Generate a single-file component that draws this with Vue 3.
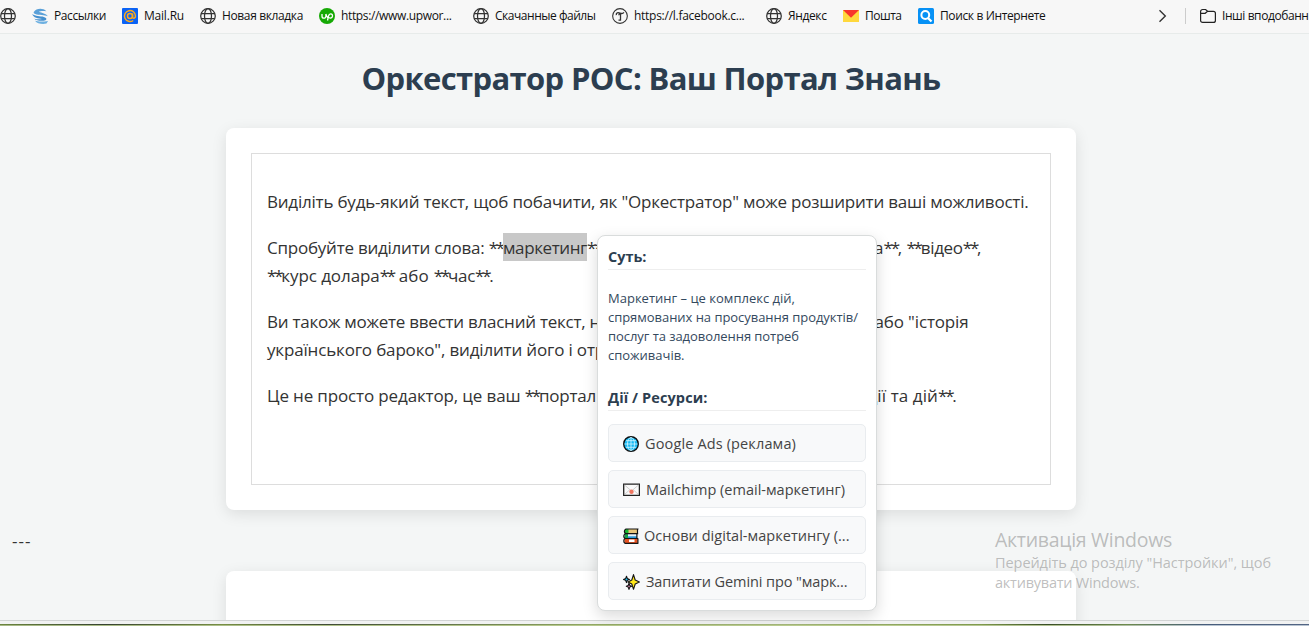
<script setup>
const bookmarks = [
  { icon: 'globe', label: '', text: 0, pitch: 32 },
  { icon: 'stream', label: 'Рассылки', text: 52, pitch: 90 },
  { icon: 'mail', label: 'Mail.Ru', text: 40, pitch: 78 },
  { icon: 'globe', label: 'Новая вкладка', text: 81, pitch: 119 },
  { icon: 'up', label: 'https://www.upwor...', text: 110.5, pitch: 154 },
  { icon: 'globe', label: 'Скачанные файлы', text: 100.5, pitch: 139 },
  { icon: 'tee', label: 'https://l.facebook.c...', text: 110.5, pitch: 154 },
  { icon: 'globe', label: 'Яндекс', text: 38.5, pitch: 77 },
  { icon: 'post', label: 'Пошта', text: 36.5, pitch: 75 },
  { icon: 'search', label: 'Поиск в Интернете', text: 105.5, pitch: 140 },
]

const stars = { t: '**', w: 14.3 }

const paragraphs = [
  [[{ t: 'Виділіть будь-який текст, щоб побачити, як "Оркестратор" може розширити ваші можливості.', w: 761.5 }]],
  [
    [
      { t: 'Спробуйте виділити слова: ', w: 221.7 },
      stars,
      { t: 'маркетинг', w: 84, selected: true },
      stars,
      { gap: 272.7 },
      { t: 'а', w: 9.5 },
      stars,
      { t: ', ', w: 8.7 },
      stars,
      { t: 'відео', w: 42 },
      stars,
      { t: ',', w: 4 },
    ],
    [
      stars,
      { t: 'курс долара', w: 98.4 },
      stars,
      { t: ' або ', w: 39.7 },
      stars,
      { t: 'час', w: 27 },
      stars,
      { t: '.', w: 4 },
    ],
  ],
  [
    [{ t: 'Ви також можете ввести власний текст, н', w: 333 }, { gap: 274.5 }, { t: 'або "історія', w: 94 }],
    [{ t: 'українського бароко", виділити його і отр', w: 338 }],
  ],
  [
    [
      { t: 'Це не просто редактор, це ваш ', w: 257.700 },
      stars,
      { t: 'портал', w: 57 },
      { gap: 271.5 },
      { t: 'дії та дій', w: 70.5 },
      stars,
      { t: '.', w: 4 },
    ],
  ],
]

const summary = [
  { t: 'Маркетинг – це комплекс дій,', w: 187 },
  { t: 'спрямованих на просування продуктів/', w: 250 },
  { t: 'послуг та задоволення потреб', w: 191 },
  { t: 'споживачів.', w: 76.5 },
]

const actions = [
  { icon: 'web', t: 'Google Ads (реклама)', w: 151, gap: 6 },
  { icon: 'letter', t: 'Mailchimp (email-маркетинг)', w: 199, gap: 6 },
  { icon: 'books', t: 'Основи digital-маркетингу (...', w: 205.5, gap: 5 },
  { icon: 'sparkles', t: 'Запитати Gemini про "марк...', w: 201.5, gap: 6 },
]

// Spreads the letters of a label so that it fills the given width.
const vFit = {
  mounted(el, { value }) {
    if (!value) return
    const natural = el.getBoundingClientRect().width
    el.style.letterSpacing = `${(value - natural) / el.textContent.length}px`
  },
}
</script>

<template>
  <div class="screen">
    <nav class="bar">
      <div v-for="(b, i) in bookmarks" :key="i" class="bookmark" :style="{ width: b.pitch + 'px' }">
        <svg class="ico" viewBox="0 0 16 16" fill="none">
          <g v-if="b.icon === 'globe'" stroke="#333" stroke-width="1.25">
            <circle cx="8" cy="8" r="7.3" />
            <ellipse cx="8" cy="8" rx="3.5" ry="7.3" />
            <path d="M1.2 5.5h13.6M1.2 10.5h13.6" />
          </g>
          <g v-else-if="b.icon === 'stream'">
            <path d="M2 3.8C4 .2 11 -.4 14.300 3.200c-3-.5-6-.3-7.500.5C10 5 14 5.300 15.800 8.300c-3-1.500-9-.8-12.500-2.200C1.700 5.300 1.300 4.600 2 3.800Z" fill="#5aa0d8" />
            <path d="M.2 6c3 2.500 8 1.900 11.700 2.900 2.700.7 3.200 2.400 1.600 3.400C10 13.500 4 12.700 2.300 10.700c3 .8 6 .7 7.700.2C6.500 10.300 1.200 10 .2 6Z" fill="#4590cf" />
            <path d="M3 12.700c3 1 7.500 1.100 13 .3l-1.500 2.600c-4 .9-9.500.2-11.500-2.900Z" fill="#6db0e1" />
          </g>
          <g v-else-if="b.icon === 'mail'">
            <rect width="16" height="16" rx="1" fill="#0a62f5" />
            <circle cx="8" cy="8" r="2.500" stroke="#ffaa1a" stroke-width="1.500" />
            <path d="M10.500 5.500v3.300c0 2.300 3 1.900 3-.8a5.500 5.500 0 1 0-2.300 4.500" stroke="#ffaa1a" stroke-width="1.500" />
          </g>
          <g v-else-if="b.icon === 'up'">
            <circle cx="8" cy="8" r="8" fill="#16a905" />
            <path d="M3 6v2.200c0 2.600 3.900 2.600 3.900 0V6M6.900 6c.4 2 1.200 3 2 3.900M8.500 12.500l1-4.500c.8-3.200 4.300-2.600 4 .1-.3 2.300-3 2.500-4.300.8" stroke="#fff" stroke-width="1.300" />
          </g>
          <g v-else-if="b.icon === 'tee'" stroke="#333">
            <circle cx="8" cy="8" r="7.350" stroke-width="1.100" />
            <path d="M4.300 7.200C3.900 4.600 6 4.300 8 5.100c1.800.7 3 .6 3.900-.8M8.500 5.300v6.900M6.800 7.300c0-1 .6-1.700 1.700-1.900M6.500 12.100h2.600" stroke-width="1.300" />
          </g>
          <g v-else-if="b.icon === 'post'">
            <path d="M0 2h16v12H0Z" fill="#ffd83d" />
            <path d="M0 2h16L8 9.700Z" fill="#f8352c" />
          </g>
          <g v-else>
            <rect width="16" height="16" rx="1.500" fill="#0791f5" />
            <circle cx="7.300" cy="7" r="3.900" stroke="#fff" stroke-width="2" />
            <path d="m10 10 3.500 3.500" stroke="#fff" stroke-width="2.300" />
          </g>
        </svg>
        <span v-if="b.label" v-fit="b.text">{{ b.label }}</span>
      </div>
      <div class="bar-end">
        <svg class="chevron" viewBox="0 0 9 14"><path d="m1.500 1.300 5.800 5.700-5.800 5.700" fill="none" stroke="#333" stroke-width="1.400" /></svg>
        <i class="divider"></i>
        <svg class="ico folder" viewBox="0 0 16 16" fill="none" stroke="#222" stroke-width="1.200">
          <path d="M.6 3.500A2 2 0 0 1 2.600 1.500h3l2 1.800h5.800a2 2 0 0 1 2 2v7.100a2 2 0 0 1-2 2H2.600a2 2 0 0 1-2-2ZM.6 5.300h4.600L7.600 3.300" />
        </svg>
        <span v-fit="86.500">Інші вподобанн</span>
      </div>
    </nav>

    <main class="page">
      <h1><span v-fit="579">Оркестратор РОС: Ваш Портал Знань</span></h1>
      <section class="card">
        <div class="editor">
          <p v-for="(lines, i) in paragraphs" :key="i">
            <span v-for="(line, j) in lines" :key="j" class="line">
              <template v-for="(s, k) in line" :key="k">
                <i v-if="s.gap" :style="{ width: s.gap + 'px' }"></i>
                <span v-else v-fit="s.w" :class="{ selected: s.selected }">{{ s.t }}</span>
              </template>
            </span>
          </p>
        </div>
      </section>
      <div class="rule-text"><span v-fit="19.5">---</span></div>
      <section class="card next"></section>
    </main>

    <footer class="edge"></footer>

    <aside class="popup">
      <h2><span v-fit="38.500">Суть:</span></h2>
      <div class="summary">
        <div v-for="s in summary" :key="s.t"><span v-fit="s.w">{{ s.t }}</span></div>
      </div>
      <h2><span v-fit="99.500">Дії / Ресурси:</span></h2>
      <div class="actions">
        <button v-for="a in actions" :key="a.t" :style="{ gap: a.gap + 'px' }">
          <svg v-if="a.icon === 'web'" width="16" height="16" viewBox="0 0 16 16" fill="none">
            <circle cx="8" cy="8" r="7.300" fill="#18b9f2" stroke="#111" stroke-width="1.400" />
            <path d="M8 1.500v13M1.500 8h13M3 4.700h10M3 11.300h10" stroke="#d6f6ff" stroke-width=".8" />
            <ellipse cx="8" cy="8" rx="3.500" ry="6.500" stroke="#d6f6ff" stroke-width=".8" />
          </svg>
          <svg v-else-if="a.icon === 'letter'" width="17" height="16" viewBox="0 0 17 16" fill="none">
            <path d="M.7 2.200h15.700v11.200H.7Z" fill="#fafafa" stroke="#222" stroke-width="1.300" />
            <path d="m1.500 3 7 6 7-6M1.500 12.500l5-4.500M15.500 12.500l-5-4.500" stroke="#bbb" stroke-width=".7" />
            <circle cx="8.500" cy="9.800" r="2.200" fill="#ef7660" />
          </svg>
          <svg v-else-if="a.icon === 'books'" width="16" height="16" viewBox="0 0 16 16" fill="none">
            <path d="M2 1h12.500v4.500H2Z" fill="#e9c67b" />
            <path d="M2 1h3.500v4.500H2Z" fill="#19b832" />
            <path d="M1.500 5.500h12.500v5H1.500Z" fill="#e9f3fa" />
            <path d="M1.500 5.500H5v5H1.500Z" fill="#16a24b" />
            <path d="M5 8.300h9v1.800H5Z" fill="#2995d6" />
            <path d="M1.500 11h13.200v4H1.500Z" fill="#e75221" />
            <path d="M6 11.500h5.500v2.500H6Z" fill="#fff" />
            <path d="M15.500 1H2.900C.9 2 .9 4.500 2.700 5.700h12.500M14.500 1v4.500M2.300 5.700C.3 6.800.3 9.300 2 10.500h13.200M13.900 5.700v5M2 10.500c-1.600 1.200-1.600 3.700 0 4.800h13.400M14.900 10.500v4.800" stroke="#151515" stroke-width="1.200" />
          </svg>
          <svg v-else width="17" height="16" viewBox="0 0 17 16" stroke="#151515" stroke-width="1.100" stroke-linejoin="round">
            <path d="M10.500.6 12.200 6l4.200 2-4.200 2-1.700 5.300L8.800 10 5 8l3.800-2Z" fill="#ffe81a" />
            <path d="m3.500 2.300.9 2.300 2.100.8-2.100.9-.9 2.300-.9-2.300-2.100-.9 2.100-.8Z" fill="#24bdec" />
            <path d="m6 9.300.8 2.200 1.900.8-1.900.8L6 15.400l-.8-2.300-1.900-.8 1.900-.8Z" fill="#f490bd" />
          </svg>
          <span v-fit="a.w">{{ a.t }}</span>
        </button>
      </div>
    </aside>

    <aside class="watermark">
      <div class="wm-title"><span v-fit="177">Активація Windows</span></div>
      <div><span v-fit="276">Перейдіть до розділу "Настройки", щоб</span></div>
      <div><span v-fit="144.500">активувати Windows.</span></div>
    </aside>
  </div>
</template>

<style>
body { margin: 0; overflow: hidden; }
</style>

<style scoped>
.screen {
  position: relative;
  display: flex;
  flex-direction: column;
  width: 1309px;
  height: 626px;
  overflow: hidden;
  background: #f4f6f6;
  color: #333;
  font-family: "Open Sans", "Noto Sans", sans-serif;
  white-space: nowrap;
}
span { white-space: pre; }
svg { flex: none; display: block; }
.bar {
  display: flex;
  align-items: center;
  flex: none;
  box-sizing: border-box;
  height: 34px;
  padding-bottom: 1px;
  background: #f7f7f7;
  border-bottom: 1px solid #e7ebea;
  color: #111;
  font-size: 12px;
}
.bar span { padding-bottom: 2px; }
.bookmark { display: flex; align-items: center; gap: 6px; flex: none; }
.ico { width: 16px; height: 16px; }
.bar-end { display: flex; align-items: center; flex: none; margin-left: 100px; }
.chevron { width: 9px; height: 14px; }
.divider { width: 1px; height: 16px; margin: 0 14px 0 18px; background: #ccc; }
.folder { margin-right: 6px; }
.page { flex: none; height: 586px; overflow: hidden; }
h1 {
  height: 44px;
  margin: 22px 0 28px;
  padding-right: 7px;
  color: #2c3e50;
  font-size: 31px;
  font-weight: 700;
  line-height: 44px;
  text-align: center;
}
.card {
  box-sizing: border-box;
  width: 850px;
  height: 382px;
  margin-left: 226px;
  padding: 25px;
  border-radius: 8px;
  background: #fff;
  box-shadow: 0 4px 15px rgba(0, 0, 0, .1);
}
.editor {
  box-sizing: border-box;
  height: 332px;
  padding: 34px 15px 0;
  border: 1px solid #ddd;
  font-size: 17px;
  line-height: 28px;
}
.editor p { margin: 0 0 18px; }
.line { display: flex; }
.line > * { flex: none; }
.selected { height: 28px; margin: -1px 0 1px; background: #c8c8c8; line-height: 30px; }
.rule-text { height: 61px; padding-left: 12px; font-size: 17px; line-height: 61px; }
.edge {
  flex: none;
  box-sizing: border-box;
  height: 6px;
  border-top: 1px solid #d2d4d4;
  background:
    linear-gradient(90deg, #6d8740, #354131 8%, #788f45 17%, #3f4b36 25%, #91a864 45%, #a5b77b 60%, #7f9a4c 75%, #384d26 80%, #6d8b4e 86%, #475c7b 92%, #536584) 0 3px / 100% 1px no-repeat,
    linear-gradient(90deg, #a7b886, #bdcf90 65%, #aebd94 84%, #b7c3d0 92%) 0 4px / 100% 1px no-repeat,
    #f1f2f2;
}
.popup {
  position: absolute;
  top: 235px;
  left: 597px;
  box-sizing: border-box;
  width: 280px;
  height: 376px;
  padding: 8px 10px 10px;
  border: 1px solid #d9dcdc;
  border-radius: 8px;
  background: #fff;
  box-shadow: 0 5px 15px rgba(0, 0, 0, .15);
}
.popup h2 {
  height: 25px;
  margin: 0;
  border-bottom: 1px solid #eee;
  color: #2c3e50;
  font-size: 14.500px;
  font-weight: 700;
  line-height: 26px;
}
.summary { padding: 19px 0 20px; color: #34495e; font-size: 13px; line-height: 19px; }
.actions { display: flex; flex-direction: column; gap: 8px; margin-top: 13px; }
button {
  display: flex;
  align-items: center;
  box-sizing: border-box;
  height: 38px;
  padding: 0 14px;
  border: 1px solid #e9ecef;
  border-radius: 5px;
  background: #f8f9fa;
  color: #444;
  font: 14.500px "Open Sans", "Noto Sans", sans-serif;
  white-space: nowrap;
}
button svg { margin-top: 1px; }
.watermark {
  position: absolute;
  top: 527px;
  left: 995px;
  color: rgba(150, 150, 150, .62);
  font-size: 14.500px;
  line-height: 20px;
}
.wm-title { height: 26px; font-size: 19.500px; line-height: 26px; }
</style>
